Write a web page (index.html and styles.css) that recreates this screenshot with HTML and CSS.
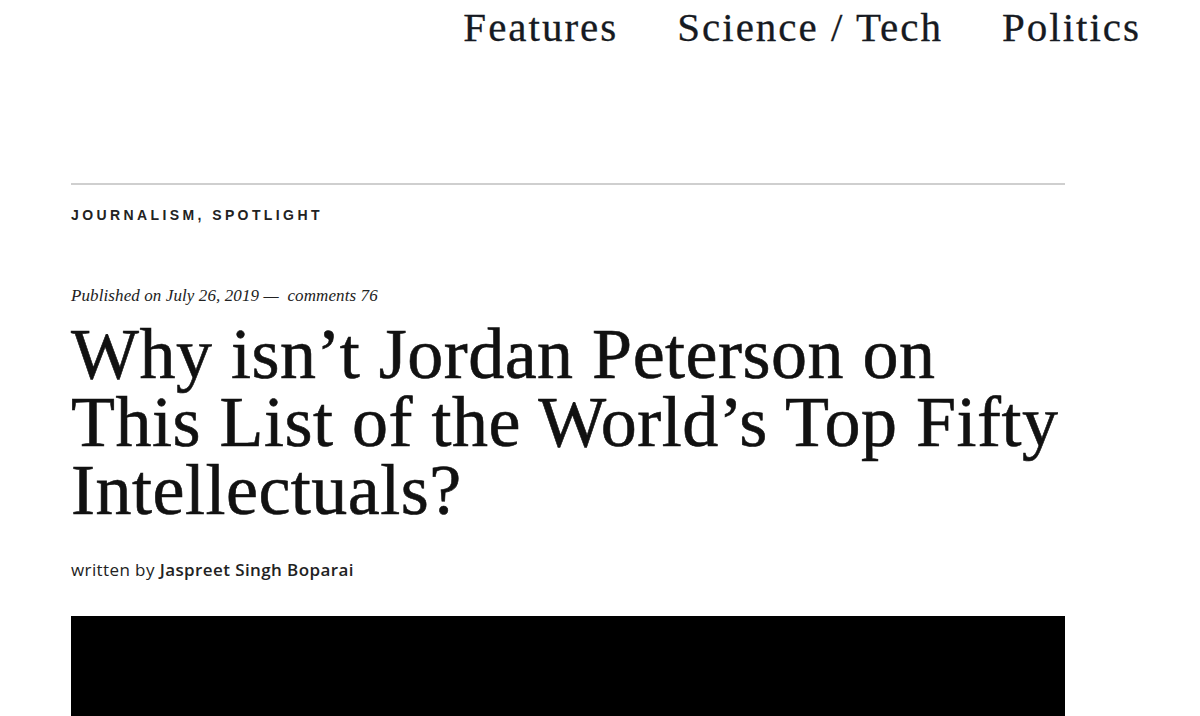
FILE: index.html
```html
<!DOCTYPE html>
<html lang="en">
<head>
<meta charset="utf-8">
<title>Why isn’t Jordan Peterson on This List of the World’s Top Fifty Intellectuals?</title>
<link rel="stylesheet" href="styles.css">
</head>
<body>
<header class="site-header">
  <nav class="main-nav">
    <a class="nav-link" href="#">Features</a>
    <a class="nav-link" href="#">Science / Tech</a>
    <a class="nav-link" href="#">Politics</a>
  </nav>
</header>
<main class="article">
  <div class="rule"></div>
  <div class="categories">Journalism, Spotlight</div>
  <div class="meta">Published on July 26, 2019 — &nbsp;comments 76</div>
  <h1 class="title">Why isn’t Jordan Peterson on This List of the World’s Top Fifty Intellectuals?</h1>
  <div class="byline">written by <strong>Jaspreet Singh Boparai</strong></div>
  <div class="hero"></div>
</main>
</body>
</html>
```
FILE: styles.css
```css
html, body {
  margin: 0;
  padding: 0;
  background: #fff;
  overflow: hidden;
}
body {
  height: 716px;
  color: #111;
  font-family: "Liberation Serif", serif;
}
.site-header {
  display: flex;
  justify-content: flex-end;
  padding: 0 59px 0 0;
  height: 60px;
}
.main-nav {
  display: flex;
  gap: 59px;
  padding-top: 3px;
}
.nav-link {
  font-family: "Liberation Serif", serif;
  font-size: 41px;
  letter-spacing: 2px;
  line-height: 48px;
  color: #161a22;
  text-decoration: none;
  -webkit-text-stroke: 0.3px #161a22;
}
.article {
  width: 994px;
  margin: 0 0 0 71px;
  padding-top: 123px;
}
.rule {
  height: 2px;
  background: #cfcfcf;
}
.categories {
  margin-top: 21px;
  font-family: "Liberation Sans", sans-serif;
  font-weight: bold;
  font-size: 14px;
  letter-spacing: 3.4px;
  text-transform: uppercase;
  color: #222;
  line-height: 18px;
}
.meta {
  margin-top: 62px;
  font-family: "Liberation Serif", serif;
  font-style: italic;
  font-size: 17px;
  letter-spacing: 0.1px;
  line-height: 20px;
  color: #222;
}
.title {
  margin: 14px 0 0;
  font-family: "Liberation Serif", serif;
  font-weight: normal;
  font-size: 72px;
  letter-spacing: 0.5px;
  line-height: 68px;
  color: #111;
  width: 994px;
  -webkit-text-stroke: 0.6px #111;
}
.byline {
  margin-top: 36px;
  font-family: "Open Sans", sans-serif;
  font-size: 17px;
  letter-spacing: 0.4px;
  line-height: 20px;
  color: #222;
}
.byline strong {
  font-weight: 600;
}
.hero {
  margin-top: 36px;
  height: 200px;
  background: #000;
}
```
